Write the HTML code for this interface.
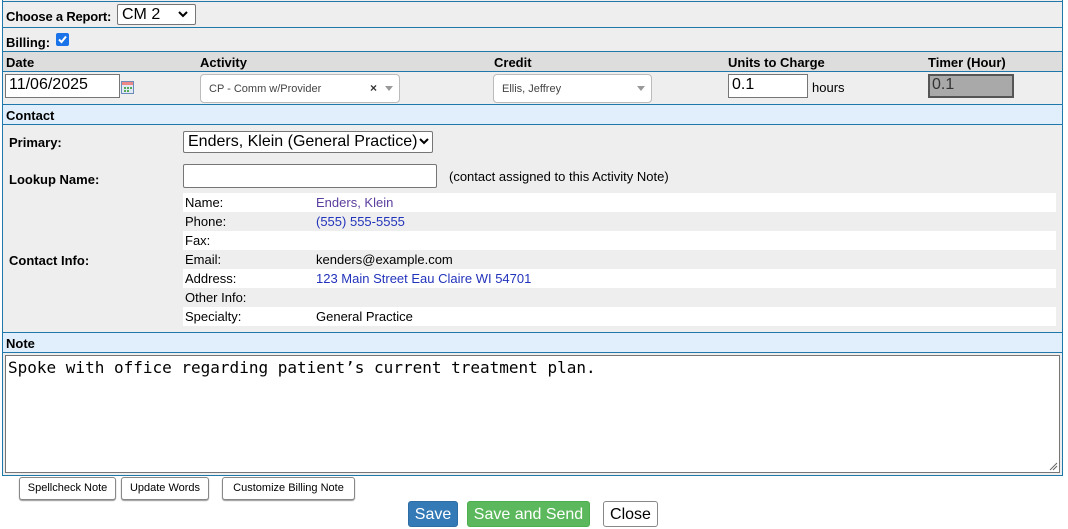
<!DOCTYPE html>
<html><head><style>
*{box-sizing:border-box}
body{margin:0;width:1068px;height:529px;background:#fff;font-family:"Liberation Sans",Arial,sans-serif;font-size:13px;color:#000;position:relative;overflow:hidden}
.a{position:absolute}
.line{position:absolute;left:2px;width:1061px;height:1px;background:#1f77aa}
b{font-weight:bold}
.sel2{position:absolute;background:#fff;border:1px solid #bbb;border-radius:4px;font-size:11px;color:#444;padding:8px 0 0 8px}
.tri{position:absolute;width:0;height:0;border-left:4px solid transparent;border-right:4px solid transparent;border-top:5px solid #999}
.inp{position:absolute;background:#fff;border:1px solid #767676;font-size:16px;padding:1px 3px}
.btn{position:absolute;background:#fff;border:1px solid #888;border-radius:3px;font-size:11px;text-align:center;line-height:21px;box-shadow:0 1px 1px #999}
.bb{position:absolute;border-radius:3px;font-size:16px;text-align:center;line-height:25px;color:#fff}
.row{position:absolute;left:183px;width:873px;height:19px;line-height:19px;padding-left:2px}
.row span{position:absolute;left:133px}
</style></head><body>
<div class="a" style="left:2px;top:0;width:1061px;height:476px;border:1px solid #1f77aa;border-top:0;background:#eee"></div>
<div class="a" style="left:3px;top:52px;width:1059px;height:19px;background:#ddd"></div>
<div class="a" style="left:3px;top:105px;width:1059px;height:19px;background:#e0effb"></div>
<div class="a" style="left:3px;top:333px;width:1059px;height:19px;background:#e0effb"></div>
<div class="line" style="top:1px"></div>
<div class="line" style="top:27px"></div>
<div class="line" style="top:51px"></div>
<div class="line" style="top:71px"></div>
<div class="line" style="top:104px"></div>
<div class="line" style="top:124px"></div>
<div class="line" style="top:332px"></div>
<div class="line" style="top:352px"></div>

<b class="a" style="left:6px;top:9px;letter-spacing:-0.2px">Choose a Report:</b>
<div class="a" style="left:117px;top:4px;width:79px;height:21px;background:#fff;border:1px solid #767676;border-radius:2px;font-size:16px;padding-left:4px;line-height:19px">CM 2</div>
<svg class="a" style="left:178px;top:11px" width="10" height="7"><path d="M1 1L5 5L9 1" stroke="#000" stroke-width="2" fill="none"/></svg>

<b class="a" style="left:6px;top:35px">Billing:</b>
<div class="a" style="left:56px;top:33px;width:13px;height:13px;background:#1a73e8;border-radius:2px"></div>
<svg class="a" style="left:56px;top:33px" width="13" height="13"><path d="M3 6.5L5.5 9L10 3.5" stroke="#fff" stroke-width="2" fill="none"/></svg>

<b class="a" style="left:6px;top:55px">Date</b>
<b class="a" style="left:200px;top:55px">Activity</b>
<b class="a" style="left:494px;top:55px">Credit</b>
<b class="a" style="left:728px;top:55px">Units to Charge</b>
<b class="a" style="left:928px;top:55px">Timer (Hour)</b>

<div class="inp" style="left:5px;top:74px;width:115px;height:24px">11/06/2025</div>
<svg class="a" style="left:121px;top:81px" width="13" height="13"><rect x="0.5" y="0.5" width="12" height="12" fill="#dfe8f4" stroke="#6a8cba"/><rect x="1" y="1" width="11" height="3" fill="#e88"/><path d="M3 6h2v2H3zM6 6h2v2H6zM9 6h2v2H9zM3 9h2v2H3zM6 9h2v2H6z" fill="#5a5"/></svg>

<div class="sel2" style="left:200px;top:74px;width:200px;height:29px">CP - Comm w/Provider</div>
<span class="a" style="left:370px;top:81px;font-size:12px;font-weight:bold;color:#333">×</span>
<div class="tri" style="left:385px;top:86px"></div>

<div class="sel2" style="left:493px;top:74px;width:159px;height:29px">Ellis, Jeffrey</div>
<div class="tri" style="left:637px;top:86px"></div>

<div class="inp" style="left:728px;top:74px;width:80px;height:24px">0.1</div>
<span class="a" style="left:812px;top:80px">hours</span>
<div class="inp" style="left:928px;top:74px;width:86px;height:24px;background:#a9a9a9;border:2px solid #555;color:#333;padding:0 2px">0.1</div>

<b class="a" style="left:6px;top:108px">Contact</b>

<b class="a" style="left:9px;top:135px">Primary:</b>
<div class="a" style="left:183px;top:131px;width:250px;height:22px;background:#fff;border:1px solid #767676;border-radius:2px;font-size:16px;padding-left:4px;line-height:20px">Enders, Klein (General Practice)</div>
<svg class="a" style="left:419px;top:138px" width="10" height="7"><path d="M1 1L5 5L9 1" stroke="#000" stroke-width="2" fill="none"/></svg>

<b class="a" style="left:9px;top:172px">Lookup Name:</b>
<div class="a" style="left:183px;top:164px;width:254px;height:24px;background:#fff;border:1px solid #767676;border-radius:2px"></div>
<span class="a" style="left:449px;top:169px">(contact assigned to this Activity Note)</span>

<b class="a" style="left:9px;top:253px">Contact Info:</b>
<div class="row" style="top:193px;background:#fff">Name:<span style="color:#5b3e9e">Enders, Klein</span></div>
<div class="row" style="top:212px">Phone:<span style="color:#2233bb">(555) 555-5555</span></div>
<div class="row" style="top:231px;background:#fff">Fax:</div>
<div class="row" style="top:250px">Email:<span>kenders@example.com</span></div>
<div class="row" style="top:269px;background:#fff">Address:<span style="color:#2233bb">123 Main Street Eau Claire WI 54701</span></div>
<div class="row" style="top:288px">Other Info:</div>
<div class="row" style="top:307px;background:#fff">Specialty:<span>General Practice</span></div>

<b class="a" style="left:6px;top:336px">Note</b>
<div class="a" style="left:5px;top:355px;width:1055px;height:118px;background:#fff;border:1px solid #767676;font-family:'DejaVu Sans Mono','Liberation Mono',monospace;font-size:16px;padding:2px 2px">Spoke with office regarding patient’s current treatment plan.</div>
<svg class="a" style="left:1049px;top:462px" width="9" height="9"><path d="M1 8L8 1M4 8L8 4" stroke="#666" stroke-width="1"/></svg>

<div class="btn" style="left:19px;top:477px;width:97px;height:23px">Spellcheck Note</div>
<div class="btn" style="left:121px;top:477px;width:88px;height:23px">Update Words</div>
<div class="btn" style="left:222px;top:477px;width:133px;height:23px">Customize Billing Note</div>

<div class="bb" style="left:408px;top:501px;width:50px;height:26px;background:#337ab7;border:1px solid #2e6da4">Save</div>
<div class="bb" style="left:467px;top:501px;width:123px;height:26px;background:#5cb85c;border:1px solid #4cae4c">Save and Send</div>
<div class="bb" style="left:603px;top:501px;width:55px;height:26px;background:#fff;border:1px solid #888;color:#000">Close</div>
</body></html>
